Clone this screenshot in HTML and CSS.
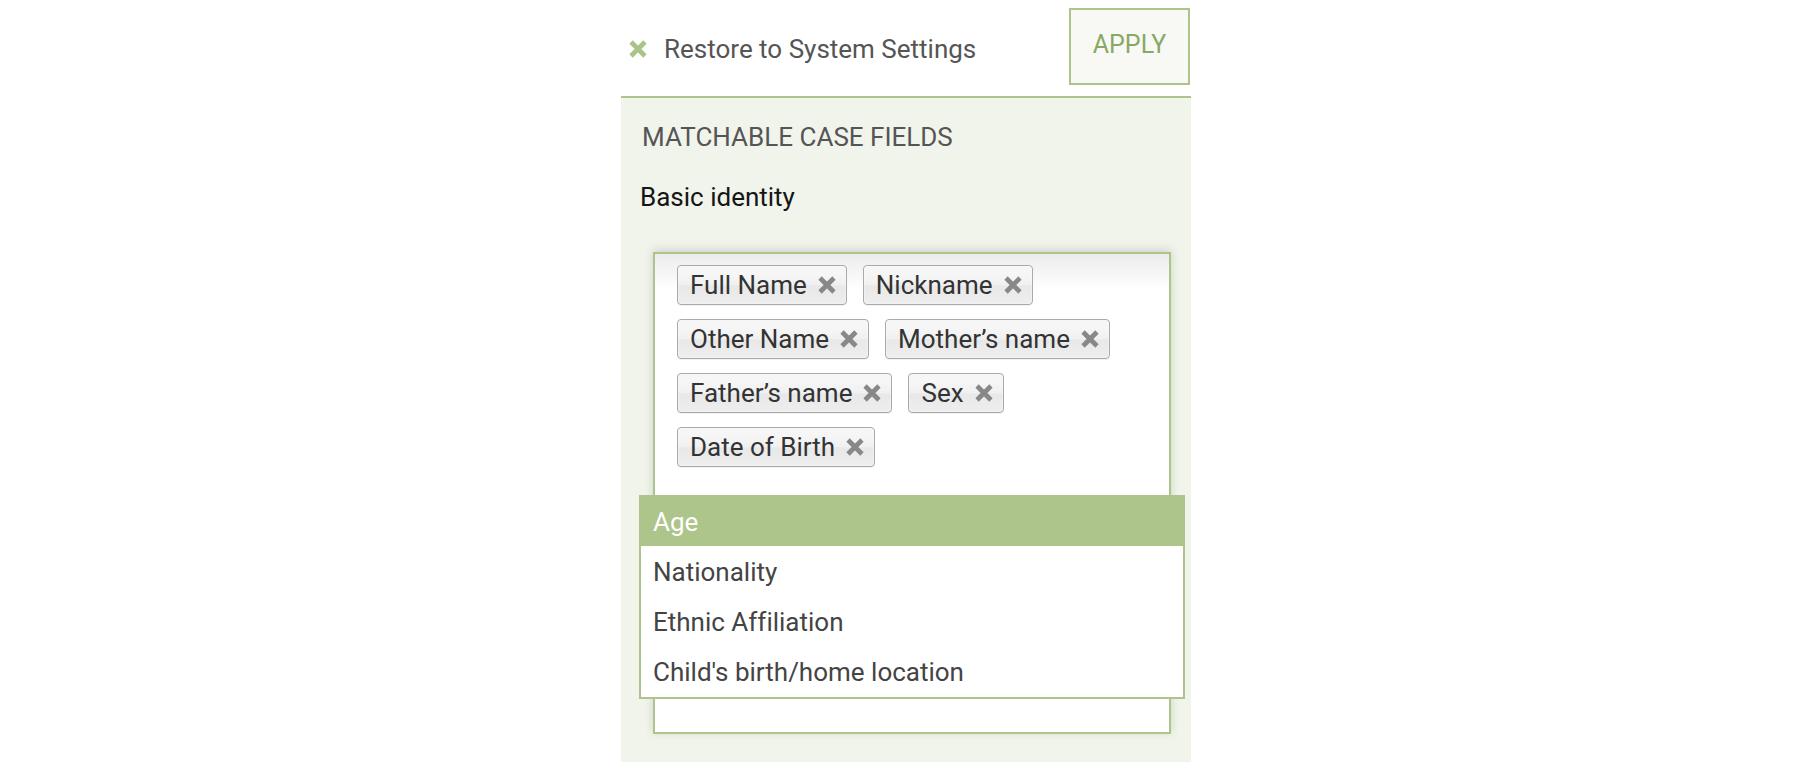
FILE: index.html
```html
<!DOCTYPE html>
<html lang="en">
<head>
<meta charset="utf-8">
<title>Matchable case fields</title>
<link rel="stylesheet" href="styles.css">
</head>
<body>
<div class="column">
  <header class="topbar">
    <a class="restore" href="#">
      <svg class="x-icon x-green" viewBox="0 0 16 16" aria-hidden="true"><path d="M1.8 1.8 L14.2 14.2 M14.2 1.8 L1.8 14.2"/></svg>
      <span>Restore to System Settings</span>
    </a>
    <button class="apply" type="button">APPLY</button>
  </header>
  <section class="panel">
    <h2 class="panel-title">MATCHABLE CASE FIELDS</h2>
    <div class="group-label">Basic identity</div>
    <div class="field">
      <ul class="choices">
        <li class="tag"><span>Full Name</span><svg class="x-icon x-gray" viewBox="0 0 16 16"><path d="M1.8 1.8 L14.2 14.2 M14.2 1.8 L1.8 14.2"/></svg></li>
        <li class="tag"><span>Nickname</span><svg class="x-icon x-gray" viewBox="0 0 16 16"><path d="M1.8 1.8 L14.2 14.2 M14.2 1.8 L1.8 14.2"/></svg></li>
        <li class="tag"><span>Other Name</span><svg class="x-icon x-gray" viewBox="0 0 16 16"><path d="M1.8 1.8 L14.2 14.2 M14.2 1.8 L1.8 14.2"/></svg></li>
        <li class="tag"><span>Mother’s name</span><svg class="x-icon x-gray" viewBox="0 0 16 16"><path d="M1.8 1.8 L14.2 14.2 M14.2 1.8 L1.8 14.2"/></svg></li>
        <li class="tag"><span>Father’s name</span><svg class="x-icon x-gray" viewBox="0 0 16 16"><path d="M1.8 1.8 L14.2 14.2 M14.2 1.8 L1.8 14.2"/></svg></li>
        <li class="tag"><span>Sex</span><svg class="x-icon x-gray" viewBox="0 0 16 16"><path d="M1.8 1.8 L14.2 14.2 M14.2 1.8 L1.8 14.2"/></svg></li>
        <li class="tag"><span>Date of Birth</span><svg class="x-icon x-gray" viewBox="0 0 16 16"><path d="M1.8 1.8 L14.2 14.2 M14.2 1.8 L1.8 14.2"/></svg></li>
      </ul>
      <ul class="dropdown">
        <li class="option active">Age</li>
        <li class="option">Nationality</li>
        <li class="option">Ethnic Affiliation</li>
        <li class="option">Child's birth/home location</li>
      </ul>
    </div>
  </section>
</div>
</body>
</html>
```
FILE: styles.css
```css
html, body {
  margin: 0;
  padding: 0;
  background: #ffffff;
  height: 100%;
  overflow: hidden;
}
body {
  font-family: Roboto, "Liberation Sans", sans-serif;
  font-size: 26px;
  font-variant-ligatures: none;
}
.column {
  width: 570px;
  margin-left: 621px;
  height: 762px;
  display: flex;
  flex-direction: column;
}
.topbar {
  height: 96px;
  border-bottom: 2px solid #adc58a;
  display: flex;
  justify-content: space-between;
  align-items: flex-start;
}
.restore {
  display: flex;
  align-items: center;
  gap: 17px;
  margin-top: 34px;
  padding-left: 8px;
  height: 30px;
  color: #555555;
  text-decoration: none;
  line-height: 30px;
}
.x-icon {
  width: 18px;
  height: 18px;
  flex: none;
}
.x-icon path {
  fill: none;
  stroke-width: 4.2;
  stroke-linecap: butt;
}
.x-green path { stroke: #a9c486; }
.x-gray path { stroke: #888888; }
.apply {
  margin-top: 8px;
  margin-right: 1px;
  width: 121px;
  height: 77px;
  border: 2px solid #adc58a;
  background: #f8f9f4;
  color: #88a866;
  font-family: Roboto, "Liberation Sans", sans-serif;
  font-size: 25px;
  padding: 0 0 4px 0;
  cursor: pointer;
}
.panel {
  flex: 1;
  background: #f1f4eb;
  padding: 24px 20px 0 19px;
}
.panel-title {
  margin: 0 0 30px 2px;
  font-size: 26px;
  font-weight: 400;
  line-height: 30px;
  color: #555555;
}
.group-label {
  line-height: 30px;
  color: #151515;
  margin-bottom: 40px;
}
.field {
  position: relative;
  margin-left: 13px;
  height: 482px;
  box-sizing: border-box;
  border: 2px solid #adc58a;
  background: linear-gradient(#ececec 0, #ffffff 36px);
  box-shadow: 0 -2px 9px rgba(0, 0, 0, 0.14);
}
.choices {
  list-style: none;
  margin: 0;
  padding: 11px 20px 0 22px;
  display: flex;
  flex-wrap: wrap;
  gap: 14px 16px;
}
.tag {
  height: 40px;
  box-sizing: border-box;
  display: flex;
  align-items: center;
  gap: 11px;
  padding: 0 10px 0 12px;
  border: 1px solid #aaaaaa;
  border-radius: 4px;
  background: linear-gradient(#f6f6f6 20%, #f0f0f0 50%, #e8e8e8 52%, #eeeeee 100%);
  box-shadow: inset 0 0 2px #ffffff, 0 1px 0 rgba(0, 0, 0, 0.05);
  color: #333333;
  line-height: 30px;
}
.dropdown {
  position: absolute;
  left: -16px;
  top: 241px;
  width: 546px;
  box-sizing: border-box;
  margin: 0;
  padding: 0;
  list-style: none;
  border: 2px solid #adc58a;
  background: #ffffff;
}
.option {
  height: 50px;
  line-height: 52px;
  padding-left: 12px;
  color: #444444;
}
.option.active {
  height: 49px;
  line-height: 50px;
  background: #adc58a;
  color: #ffffff;
}
.option:last-child {
  height: 51px;
}
```
